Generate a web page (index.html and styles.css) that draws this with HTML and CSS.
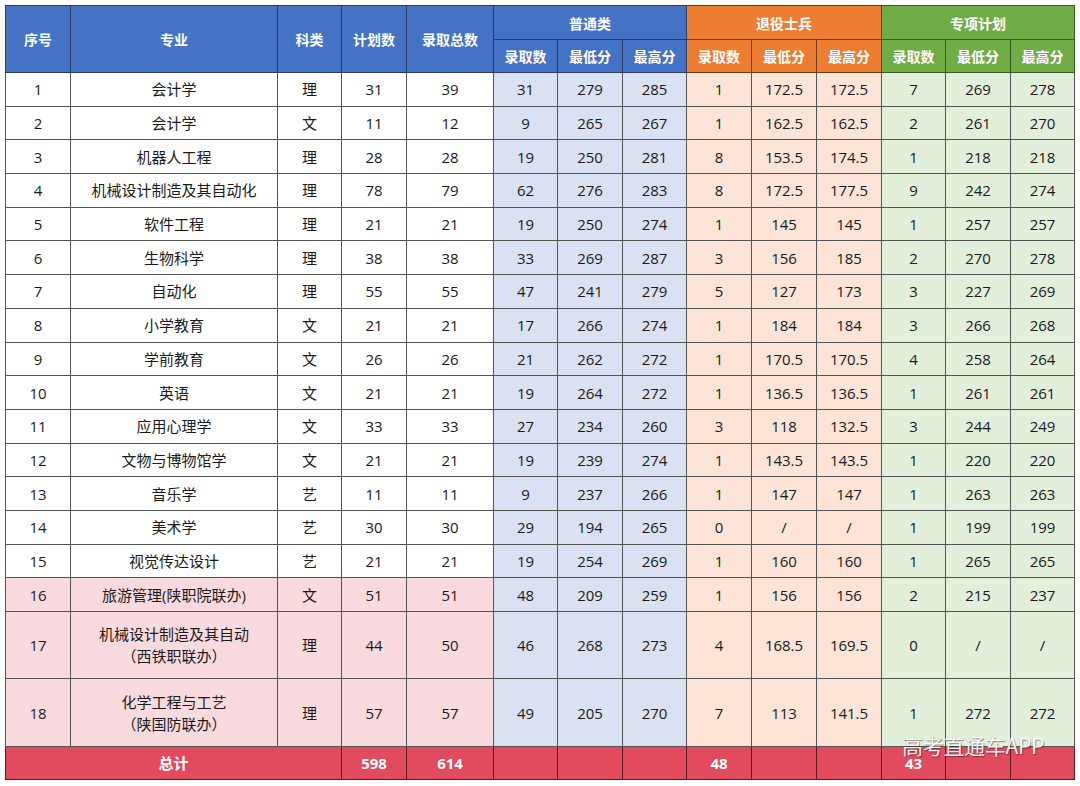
FILE: index.html
```html
<!DOCTYPE html>
<html lang="zh">
<head>
<meta charset="utf-8">
<link rel="stylesheet" href="styles.css">
</head>
<body>
<div class="wrap">
<table class="grid">
<colgroup>
<col style="width:65px"><col style="width:207px"><col style="width:64px"><col style="width:65px"><col style="width:87px">
<col style="width:64px"><col style="width:65px"><col style="width:64px">
<col style="width:65px"><col style="width:65px"><col style="width:65px">
<col style="width:64px"><col style="width:65px"><col style="width:64px">
</colgroup>
<thead>
<tr class="h1">
<th rowspan="2" class="hb">序号</th>
<th rowspan="2" class="hb">专业</th>
<th rowspan="2" class="hb">科类</th>
<th rowspan="2" class="hb">计划数</th>
<th rowspan="2" class="hb">录取总数</th>
<th colspan="3" class="hb">普通类</th>
<th colspan="3" class="ho">退役士兵</th>
<th colspan="3" class="hg">专项计划</th>
</tr>
<tr class="h2">
<th class="hb">录取数</th><th class="hb">最低分</th><th class="hb">最高分</th>
<th class="ho">录取数</th><th class="ho">最低分</th><th class="ho">最高分</th>
<th class="hg">录取数</th><th class="hg">最低分</th><th class="hg">最高分</th>
</tr>
</thead>
<tbody>
<tr class="r"><td>1</td><td>会计学</td><td>理</td><td>31</td><td>39</td><td class="b">31</td><td class="b">279</td><td class="b">285</td><td class="o">1</td><td class="o">172.5</td><td class="o">172.5</td><td class="g">7</td><td class="g">269</td><td class="g">278</td></tr>
<tr class="r"><td>2</td><td>会计学</td><td>文</td><td>11</td><td>12</td><td class="b">9</td><td class="b">265</td><td class="b">267</td><td class="o">1</td><td class="o">162.5</td><td class="o">162.5</td><td class="g">2</td><td class="g">261</td><td class="g">270</td></tr>
<tr class="r"><td>3</td><td>机器人工程</td><td>理</td><td>28</td><td>28</td><td class="b">19</td><td class="b">250</td><td class="b">281</td><td class="o">8</td><td class="o">153.5</td><td class="o">174.5</td><td class="g">1</td><td class="g">218</td><td class="g">218</td></tr>
<tr class="r"><td>4</td><td>机械设计制造及其自动化</td><td>理</td><td>78</td><td>79</td><td class="b">62</td><td class="b">276</td><td class="b">283</td><td class="o">8</td><td class="o">172.5</td><td class="o">177.5</td><td class="g">9</td><td class="g">242</td><td class="g">274</td></tr>
<tr class="r"><td>5</td><td>软件工程</td><td>理</td><td>21</td><td>21</td><td class="b">19</td><td class="b">250</td><td class="b">274</td><td class="o">1</td><td class="o">145</td><td class="o">145</td><td class="g">1</td><td class="g">257</td><td class="g">257</td></tr>
<tr class="r"><td>6</td><td>生物科学</td><td>理</td><td>38</td><td>38</td><td class="b">33</td><td class="b">269</td><td class="b">287</td><td class="o">3</td><td class="o">156</td><td class="o">185</td><td class="g">2</td><td class="g">270</td><td class="g">278</td></tr>
<tr class="r"><td>7</td><td>自动化</td><td>理</td><td>55</td><td>55</td><td class="b">47</td><td class="b">241</td><td class="b">279</td><td class="o">5</td><td class="o">127</td><td class="o">173</td><td class="g">3</td><td class="g">227</td><td class="g">269</td></tr>
<tr class="r"><td>8</td><td>小学教育</td><td>文</td><td>21</td><td>21</td><td class="b">17</td><td class="b">266</td><td class="b">274</td><td class="o">1</td><td class="o">184</td><td class="o">184</td><td class="g">3</td><td class="g">266</td><td class="g">268</td></tr>
<tr class="r"><td>9</td><td>学前教育</td><td>文</td><td>26</td><td>26</td><td class="b">21</td><td class="b">262</td><td class="b">272</td><td class="o">1</td><td class="o">170.5</td><td class="o">170.5</td><td class="g">4</td><td class="g">258</td><td class="g">264</td></tr>
<tr class="r"><td>10</td><td>英语</td><td>文</td><td>21</td><td>21</td><td class="b">19</td><td class="b">264</td><td class="b">272</td><td class="o">1</td><td class="o">136.5</td><td class="o">136.5</td><td class="g">1</td><td class="g">261</td><td class="g">261</td></tr>
<tr class="r"><td>11</td><td>应用心理学</td><td>文</td><td>33</td><td>33</td><td class="b">27</td><td class="b">234</td><td class="b">260</td><td class="o">3</td><td class="o">118</td><td class="o">132.5</td><td class="g">3</td><td class="g">244</td><td class="g">249</td></tr>
<tr class="r"><td>12</td><td>文物与博物馆学</td><td>文</td><td>21</td><td>21</td><td class="b">19</td><td class="b">239</td><td class="b">274</td><td class="o">1</td><td class="o">143.5</td><td class="o">143.5</td><td class="g">1</td><td class="g">220</td><td class="g">220</td></tr>
<tr class="r"><td>13</td><td>音乐学</td><td>艺</td><td>11</td><td>11</td><td class="b">9</td><td class="b">237</td><td class="b">266</td><td class="o">1</td><td class="o">147</td><td class="o">147</td><td class="g">1</td><td class="g">263</td><td class="g">263</td></tr>
<tr class="r"><td>14</td><td>美术学</td><td>艺</td><td>30</td><td>30</td><td class="b">29</td><td class="b">194</td><td class="b">265</td><td class="o">0</td><td class="o">/</td><td class="o">/</td><td class="g">1</td><td class="g">199</td><td class="g">199</td></tr>
<tr class="r"><td>15</td><td>视觉传达设计</td><td>艺</td><td>21</td><td>21</td><td class="b">19</td><td class="b">254</td><td class="b">269</td><td class="o">1</td><td class="o">160</td><td class="o">160</td><td class="g">1</td><td class="g">265</td><td class="g">265</td></tr>
<tr class="r pk"><td>16</td><td>旅游管理(陕职院联办)</td><td>文</td><td>51</td><td>51</td><td class="b">48</td><td class="b">209</td><td class="b">259</td><td class="o">1</td><td class="o">156</td><td class="o">156</td><td class="g">2</td><td class="g">215</td><td class="g">237</td></tr>
<tr class="r2 pk"><td>17</td><td>机械设计制造及其自动<br>（西铁职联办）</td><td>理</td><td>44</td><td>50</td><td class="b">46</td><td class="b">268</td><td class="b">273</td><td class="o">4</td><td class="o">168.5</td><td class="o">169.5</td><td class="g">0</td><td class="g">/</td><td class="g">/</td></tr>
<tr class="r3 pk"><td>18</td><td>化学工程与工艺<br>（陕国防联办）</td><td>理</td><td>57</td><td>57</td><td class="b">49</td><td class="b">205</td><td class="b">270</td><td class="o">7</td><td class="o">113</td><td class="o">141.5</td><td class="g">1</td><td class="g">272</td><td class="g">272</td></tr>
<tr class="tot"><td colspan="3">总计</td><td>598</td><td>614</td><td></td><td></td><td></td><td>48</td><td></td><td></td><td>43</td><td></td><td></td></tr>
</tbody>
</table>
<div class="mark">高考直通车APP</div>
</div>
</body>
</html>
```
FILE: styles.css
```css
html, body {
  margin: 0;
  padding: 0;
  background: #ffffff;
}
body {
  font-family: "Open Sans", "Noto Sans CJK SC", sans-serif;
  color: #1a1a1a;
}
.wrap {
  position: relative;
  width: 1070px;
  padding: 5px;
}
.grid {
  border-collapse: collapse;
  table-layout: fixed;
  width: 1069px;
  border: 1px solid #333;
}
.grid th, .grid td {
  border: 1px solid #4a4a4a;
  padding: 0;
  text-align: center;
  vertical-align: middle;
  white-space: nowrap;
}
.grid th {
  font-family: "Noto Sans CJK SC", sans-serif;
  font-weight: 700;
  font-size: 14px;
  color: #ffffff;
  border-color: #2b3f66;
}
.h1 { height: 34px; }
.h2 { height: 33px; }
.hb { background: #4472c4; }
.ho { background: #ed7d31; border-color: #6b3a18 !important; }
.hg { background: #70ad47; border-color: #3a5a24 !important; }
.grid td {
  font-size: 15px;
  line-height: 22px;
  border-color: #555;
}
.r { height: 33.7px; }
.r2 { height: 67px; }
.r3 { height: 68px; }
.grid td.b { background: #d9e1f2; }
.grid td.o { background: #fce4d6; }
.grid td.g { background: #e2efda; }
.pk td { background: #f9dbdf; }
.tot { height: 33px; }
.tot td {
  background: #e24b5d;
  color: #ffffff;
  font-weight: 700;
  font-size: 15px;
  font-family: "Open Sans", "Noto Sans CJK SC", sans-serif;
  border-color: #5a1a22;
}
.mark {
  position: absolute;
  left: 902px;
  top: 730px;
  font-family: "Noto Sans CJK SC", sans-serif;
  font-size: 21px;
  color: #ffffff;
  letter-spacing: -0.3px;
  text-shadow: 1px 1px 1px rgba(0,0,0,0.45), -0.5px -0.5px 0 rgba(0,0,0,0.25);
  opacity: 0.92;
}
```
